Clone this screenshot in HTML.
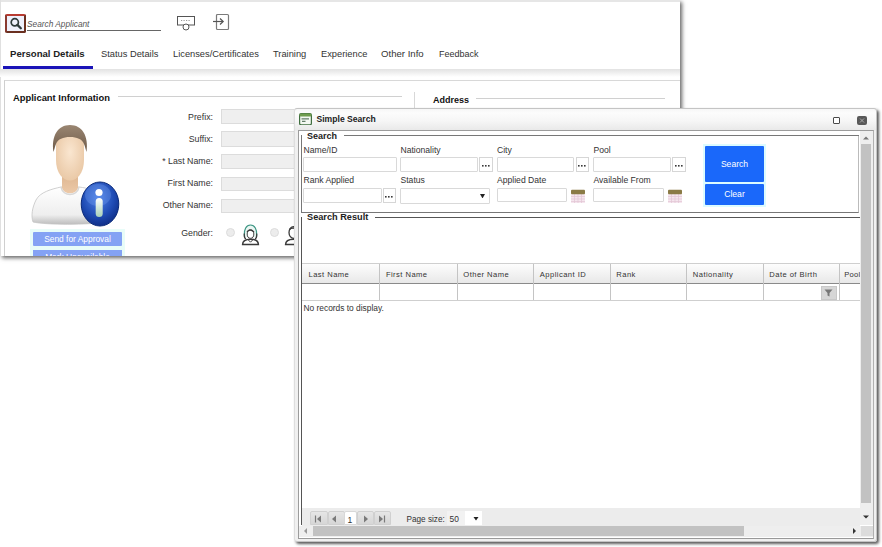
<!DOCTYPE html>
<html><head><meta charset="utf-8">
<style>
*{margin:0;padding:0;box-sizing:border-box}
html,body{width:882px;height:547px;overflow:hidden;background:#fff;font-family:"Liberation Sans",sans-serif;color:#333}
.a{position:absolute}
.t{position:absolute;white-space:nowrap;line-height:1}
.inp{position:absolute;border:1px solid #d9d9d9;background:#fff;border-radius:1px}
.ginp{position:absolute;border:1px solid #dcdcdc;background:#efefef}
.dots{position:absolute;border:1px solid #d6d6d6;background:#fff;font-size:9px;font-weight:bold;text-align:center;line-height:14px;color:#222}
</style></head><body>
<!-- background window -->
<div class="a" id="bgwin" style="left:0;top:0;width:680px;height:256px;background:#fff;box-shadow:2px 2px 4px #666;overflow:hidden">
  <div class="a" style="left:0;top:0;width:681px;height:2px;background:#e6e6e6"></div>
  <div class="a" style="left:0;top:0;width:1px;height:256px;background:#e0e0e0"></div>
  <!-- search box -->
  <div class="a" style="left:5px;top:14px;width:21px;height:19px;border:2px solid #6a3020;border-top-color:#b83a30;border-left-color:#8a3a30;border-radius:2px;background:#eef0fb"></div>
  <svg class="a" style="left:8px;top:16px" width="16" height="16" viewBox="0 0 16 16"><circle cx="6.8" cy="6.3" r="3.6" fill="none" stroke="#2e3a3a" stroke-width="1.7"/><line x1="9.4" y1="8.9" x2="12.8" y2="12.3" stroke="#2e3a3a" stroke-width="2.3" stroke-linecap="round"/></svg>
  <div class="t" style="left:27px;top:20px;font-size:8.3px;font-style:italic;color:#555">Search Applicant</div>
  <div class="a" style="left:27px;top:30px;width:134px;height:1px;background:#666"></div>
  <!-- icons -->
  <svg class="a" style="left:175px;top:14px" width="22" height="18" viewBox="0 0 22 18">
    <rect x="2.5" y="2.5" width="17" height="8.5" fill="#fff" stroke="#555" stroke-width="1"/>
    <line x1="6" y1="6.5" x2="16" y2="6.5" stroke="#999" stroke-width="1" stroke-dasharray="1.2 1.3"/>
    <circle cx="11" cy="13" r="3" fill="#fff" stroke="#555" stroke-width="1"/>
  </svg>
  <svg class="a" style="left:211px;top:12px" width="20" height="20" viewBox="0 0 20 20">
    <rect x="5.5" y="2.5" width="12" height="15" rx="1" fill="none" stroke="#7a7a7a" stroke-width="1.2"/>
    <line x1="2" y1="9.5" x2="12" y2="9.5" stroke="#555" stroke-width="1.2"/>
    <polyline points="9,6.5 12.2,9.5 9,12.5" fill="none" stroke="#555" stroke-width="1.2"/>
  </svg>
  <!-- tabs -->
  <div class="t" style="left:10px;top:49px;font-size:9.6px;font-weight:bold;color:#222">Personal Details</div>
  <div class="t" style="left:101px;top:49.5px;font-size:9.3px;color:#333">Status Details</div>
  <div class="t" style="left:173px;top:49.5px;font-size:9.3px;color:#333">Licenses/Certificates</div>
  <div class="t" style="left:273px;top:49.5px;font-size:9.3px;color:#333">Training</div>
  <div class="t" style="left:321px;top:49.5px;font-size:9.3px;color:#333">Experience</div>
  <div class="t" style="left:381px;top:49.2px;font-size:9.6px;color:#333">Other Info</div>
  <div class="t" style="left:439px;top:49.5px;font-size:9px;color:#333">Feedback</div>
  <div class="a" style="left:3px;top:66px;width:90px;height:3px;background:#1a14b8"></div>
  <div class="a" style="left:0;top:69px;width:681px;height:8px;background:linear-gradient(#e2e2e2,#fff)"></div>
  <!-- content frame -->
  <div class="a" style="left:4px;top:80px;width:677px;height:176px;border-left:1px solid #cfcfcf;border-top:1px solid #d8d8d8"></div>
  <div class="t" style="left:13px;top:93px;font-size:9.4px;font-weight:bold;color:#111">Applicant Information</div>
  <div class="a" style="left:118px;top:96px;width:284px;height:1px;background:#d0d0d0"></div>
  <div class="a" style="left:414px;top:92px;width:1px;height:17px;background:#d8d8d8"></div>
  <div class="t" style="left:433px;top:95.5px;font-size:9px;font-weight:bold;color:#111">Address</div>
  <div class="a" style="left:476px;top:98px;width:189px;height:1px;background:#d0d0d0"></div>
  <!-- labels -->
  <div class="t" style="left:100px;top:112.5px;width:113px;text-align:right;font-size:8.8px;color:#333">Prefix:</div>
  <div class="t" style="left:100px;top:134.5px;width:113px;text-align:right;font-size:8.8px;color:#333">Suffix:</div>
  <div class="t" style="left:100px;top:156.5px;width:113px;text-align:right;font-size:8.8px;color:#333">* Last Name:</div>
  <div class="t" style="left:100px;top:178.5px;width:113px;text-align:right;font-size:8.8px;color:#333">First Name:</div>
  <div class="t" style="left:100px;top:200.5px;width:113px;text-align:right;font-size:8.8px;color:#333">Other Name:</div>
  <div class="t" style="left:100px;top:229px;width:113px;text-align:right;font-size:8.8px;color:#333">Gender:</div>
  <div class="ginp" style="left:221px;top:109px;width:80px;height:15px"></div>
  <div class="ginp" style="left:221px;top:131px;width:80px;height:16px"></div>
  <div class="ginp" style="left:221px;top:154px;width:80px;height:15px"></div>
  <div class="ginp" style="left:221px;top:176.5px;width:80px;height:14.5px"></div>
  <div class="ginp" style="left:221px;top:198.5px;width:80px;height:14.5px"></div>
  <div class="a" style="left:226px;top:227.5px;width:9px;height:9px;border-radius:50%;background:#ececec;border:1px solid #dcdcdc"></div>
  <div class="a" style="left:269.5px;top:227.5px;width:9px;height:9px;border-radius:50%;background:#ececec;border:1px solid #dcdcdc"></div>
  <svg class="a" style="left:241px;top:224px" width="19" height="22" viewBox="0 0 19 22">
    <path d="M3.6 13C2.6 5 5.5 1 9.5 1S16.4 5 15.4 13" fill="#eaf7f3" stroke="#3e9684" stroke-width="1.2"/>
    <path d="M3.3 9.5C3 12.5 3.8 14.5 5 15M15.7 9.5C16 12.5 15.2 14.5 14 15" fill="none" stroke="#3a3a3a" stroke-width="1.2"/>
    <ellipse cx="9.5" cy="10" rx="3.3" ry="4.3" fill="#fff" stroke="#444" stroke-width="1"/>
    <path d="M6 8C7.5 5.5 10.5 5.5 13 8" stroke="#3a3a3a" fill="none" stroke-width="1.3"/>
    <path d="M1.6 20.6C1.6 17.2 4.5 15.3 9.5 15.3S17.4 17.2 17.4 20.6Z" fill="#fff" stroke="#3a3a3a" stroke-width="1.5"/>
    <path d="M7 15.6L9.5 18.2L12 15.6" stroke="#3a3a3a" fill="none" stroke-width="1"/>
  </svg>
  <svg class="a" style="left:284px;top:224px" width="12" height="22" viewBox="0 0 12 22">
    <ellipse cx="9.5" cy="8.5" rx="4.5" ry="5.8" fill="#fff" stroke="#3a3a3a" stroke-width="1.3"/>
    <path d="M5.5 5.5C7 3.5 11 3.5 13 5.5" stroke="#3a3a3a" fill="none" stroke-width="1.3"/>
    <path d="M1.6 20.6C1.6 17.2 4.5 15.3 9.5 15.3S17.4 17.2 17.4 20.6Z" fill="#fff" stroke="#3a3a3a" stroke-width="1.5"/>
  </svg>
  <!-- avatar -->
  <svg class="a" style="left:28px;top:118px" width="96" height="114" viewBox="0 0 96 114">
    <defs>
      <linearGradient id="hair" x1="0" y1="0" x2="0" y2="1"><stop offset="0" stop-color="#9a8672"/><stop offset="1" stop-color="#6e5a48"/></linearGradient>
      <radialGradient id="skin" cx="0.5" cy="0.45" r="0.6"><stop offset="0" stop-color="#fae6d0"/><stop offset="1" stop-color="#e9c7a4"/></radialGradient>
      <linearGradient id="shirt" x1="0" y1="0" x2="0" y2="1"><stop offset="0" stop-color="#ffffff"/><stop offset="0.75" stop-color="#eeeeee"/><stop offset="1" stop-color="#bdbdbd"/></linearGradient>
      <linearGradient id="neck" x1="0" y1="0" x2="0" y2="1"><stop offset="0" stop-color="#d9b08a"/><stop offset="1" stop-color="#ecc9a8"/></linearGradient>
      <radialGradient id="info" cx="0.45" cy="0.35" r="0.7"><stop offset="0" stop-color="#4f82e6"/><stop offset="0.6" stop-color="#1f4bb4"/><stop offset="1" stop-color="#0c2a80"/></radialGradient>
      <linearGradient id="istem" x1="0" y1="0" x2="0" y2="1"><stop offset="0" stop-color="#ffffff"/><stop offset="1" stop-color="#a8d0b8"/></linearGradient>
    </defs>
    <path d="M33 69C24 71 12 74 8 82C4 90 3 98 5 104C18 107 60 107 78 104L80 80C70 73 60 70 51 69Z" fill="url(#shirt)" stroke="#c4c4c4" stroke-width="0.8"/>
    <path d="M34 50L34 70C36 77 48 77 50 70L50 50Z" fill="url(#neck)"/>
    <path d="M33 69C35 79 49 79 51 69" fill="none" stroke="#d8d8d8" stroke-width="1.5"/>
    <path d="M28 28C28 14 34 11 42 11S56 14 56 28L56 42C56 55 49 62.5 42 62.5S28 55 28 42Z" fill="url(#skin)"/>
    <path d="M25.5 34C23 18 30 7 42 7S61 18 58.5 34C57.5 31 57 28 56 26C54 21 49 19 42 19S30 21 28 26C27 28 26.5 31 25.5 34Z" fill="url(#hair)"/>
    <ellipse cx="72" cy="86" rx="18.8" ry="22" fill="url(#info)" stroke="#0a2a7a" stroke-width="1"/>
    <ellipse cx="70" cy="77" rx="13" ry="11" fill="#7aa4f4" opacity="0.3"/>
    <circle cx="71" cy="74.5" r="3.6" fill="#fff"/>
    <rect x="67.7" y="80" width="7" height="19" rx="3.5" fill="url(#istem)"/>
  </svg>
  <div class="a" style="left:30px;top:229px;width:95px;height:28px;background:#e8fcf8"></div>
  <div class="a" style="left:33px;top:232px;width:89px;height:14px;background:#84a2f4;border-radius:1px"></div>
  <div class="t" style="left:33px;top:235px;width:89px;text-align:center;font-size:8.4px;color:#fff">Send for Approval</div>
  <div class="a" style="left:33px;top:250px;width:89px;height:8px;background:#84a2f4"></div>
  <div class="t" style="left:33px;top:253px;width:89px;text-align:center;font-size:8.4px;color:#fff">Mark Unavailable</div>
</div>
<!-- dialog -->
<div class="a" id="dlg" style="left:294px;top:108px;width:583px;height:434px;background:linear-gradient(#f6f6f6,#fcfcfc 4px,#f6f6f6 12px,#e9e9e9 21px,#f0f0f0 22px);border:1px solid #c4c4c4;border-left-color:#dedede;border-radius:3px;box-shadow:2px 2px 3px #5a5a5a"></div>
<!-- title -->
<svg class="a" style="left:299px;top:112.5px" width="13" height="12.5" viewBox="0 0 13 12.5">
  <rect x="0.6" y="0.6" width="11.8" height="11.3" rx="1.6" fill="#f4f8f2" stroke="#3f6e3f" stroke-width="1.2"/>
  <rect x="0.6" y="0.6" width="11.8" height="2.8" rx="1.2" fill="#6f9c4e"/>
  <line x1="2.5" y1="5.9" x2="10" y2="5.9" stroke="#3f5e46" stroke-width="1"/>
  <line x1="3" y1="8.3" x2="6.5" y2="8.3" stroke="#3f5e46" stroke-width="1"/>
</svg>
<div class="t" style="left:316.5px;top:114.8px;font-size:8.6px;font-weight:bold;color:#222">Simple Search</div>
<div class="a" style="left:832.5px;top:117px;width:7.5px;height:7px;border:1.6px solid #4a4a4a;border-radius:1px;background:#fff"></div>
<div class="a" style="left:857px;top:116px;width:10px;height:9px;background:#595959;border-radius:2px"></div>
<svg class="a" style="left:857px;top:116px" width="10" height="9" viewBox="0 0 10 9"><path d="M3 2.5L7 6.5M7 2.5L3 6.5" stroke="#aaa" stroke-width="1"/></svg>
<!-- content -->
<div class="a" style="left:298px;top:129.5px;width:576px;height:409px;background:#fff;border:1.5px solid #9c9c9c;border-right:1px solid #b0b0b0;border-bottom:1.5px solid #999"></div>
<!-- search fieldset -->
<div class="a" style="left:301px;top:135px;width:558px;height:78px;border:1px solid #777;border-top:none;border-right-color:#bbb"></div>
<div class="a" style="left:344px;top:135px;width:515px;height:1px;background:#777"></div>
<div class="t" style="left:307px;top:131.5px;font-size:9px;font-weight:bold;color:#222">Search</div>
<div class="t" style="left:303.5px;top:145.5px;font-size:8.6px;color:#333">Name/ID</div>
<div class="t" style="left:400.5px;top:145.5px;font-size:8.6px;color:#333">Nationality</div>
<div class="t" style="left:497px;top:145.5px;font-size:8.6px;color:#333">City</div>
<div class="t" style="left:593.5px;top:145.5px;font-size:8.6px;color:#333">Pool</div>
<div class="t" style="left:303.5px;top:176px;font-size:8.6px;color:#333">Rank Applied</div>
<div class="t" style="left:400.5px;top:176px;font-size:8.6px;color:#333">Status</div>
<div class="t" style="left:497px;top:176px;font-size:8.6px;color:#333">Applied Date</div>
<div class="t" style="left:593.5px;top:176px;font-size:8.6px;color:#333">Available From</div>
<div class="inp" style="left:303px;top:157px;width:94px;height:15px"></div>
<div class="inp" style="left:400px;top:157px;width:78px;height:15px"></div>
<div class="dots" style="left:479px;top:157px;width:14px;height:15px"><svg width="8" height="2" style="position:absolute;left:50%;margin-left:-4px;bottom:4px" viewBox="0 0 8 2"><rect x="0" y="0" width="1.6" height="1.6" fill="#3a3a3a"/><rect x="3" y="0" width="1.6" height="1.6" fill="#3a3a3a"/><rect x="6" y="0" width="1.6" height="1.6" fill="#3a3a3a"/></svg></div>
<div class="inp" style="left:497px;top:157px;width:77px;height:15px"></div>
<div class="dots" style="left:575.5px;top:157px;width:13px;height:15px"><svg width="8" height="2" style="position:absolute;left:50%;margin-left:-4px;bottom:4px" viewBox="0 0 8 2"><rect x="0" y="0" width="1.6" height="1.6" fill="#3a3a3a"/><rect x="3" y="0" width="1.6" height="1.6" fill="#3a3a3a"/><rect x="6" y="0" width="1.6" height="1.6" fill="#3a3a3a"/></svg></div>
<div class="inp" style="left:593px;top:157px;width:78px;height:15px"></div>
<div class="dots" style="left:672px;top:157px;width:14px;height:15px"><svg width="8" height="2" style="position:absolute;left:50%;margin-left:-4px;bottom:4px" viewBox="0 0 8 2"><rect x="0" y="0" width="1.6" height="1.6" fill="#3a3a3a"/><rect x="3" y="0" width="1.6" height="1.6" fill="#3a3a3a"/><rect x="6" y="0" width="1.6" height="1.6" fill="#3a3a3a"/></svg></div>
<div class="inp" style="left:303px;top:188px;width:78.5px;height:15px"></div>
<div class="dots" style="left:382.5px;top:188px;width:13.5px;height:15px"><svg width="8" height="2" style="position:absolute;left:50%;margin-left:-4px;bottom:4px" viewBox="0 0 8 2"><rect x="0" y="0" width="1.6" height="1.6" fill="#3a3a3a"/><rect x="3" y="0" width="1.6" height="1.6" fill="#3a3a3a"/><rect x="6" y="0" width="1.6" height="1.6" fill="#3a3a3a"/></svg></div>
<div class="inp" style="left:400px;top:188px;width:90px;height:15.5px"></div>
<svg class="a" style="left:480px;top:193.5px" width="5" height="4.5" viewBox="0 0 5 4.5"><path d="M0 0H5L2.5 4.5Z" fill="#222"/></svg>
<div class="inp" style="left:497px;top:188px;width:70px;height:14px"></div>
<div class="inp" style="left:593px;top:188px;width:71px;height:14px"></div>
<svg class="a" style="left:571px;top:189px" width="14" height="14" viewBox="0 0 14 14">
  <rect x="0" y="5" width="14" height="9" fill="#f5e6ee"/>
  <path d="M0 7.5H14M0 10H14M0 12.5H14M3.5 5V14M7 5V14M10.5 5V14" stroke="#e2c4d4" stroke-width="0.7"/>
  <rect x="0" y="0.8" width="14" height="4.5" rx="1" fill="#8a7a45"/>
</svg>
<svg class="a" style="left:668px;top:189px" width="14" height="14" viewBox="0 0 14 14">
  <rect x="0" y="5" width="14" height="9" fill="#f5e6ee"/>
  <path d="M0 7.5H14M0 10H14M0 12.5H14M3.5 5V14M7 5V14M10.5 5V14" stroke="#e2c4d4" stroke-width="0.7"/>
  <rect x="0" y="0.8" width="14" height="4.5" rx="1" fill="#8a7a45"/>
</svg>
<div class="a" style="left:703px;top:144px;width:63px;height:63px;background:#dcfbff"></div>
<div class="a" style="left:705px;top:146px;width:59px;height:36px;background:#1a68fa;border-radius:1px"></div>
<div class="t" style="left:705px;top:160px;width:59px;text-align:center;font-size:8.6px;color:#fff">Search</div>
<div class="a" style="left:705px;top:184px;width:59px;height:20.5px;background:#1a68fa;border-radius:1px"></div>
<div class="t" style="left:705px;top:190px;width:59px;text-align:center;font-size:8.6px;color:#fff">Clear</div>
<!-- search result fieldset -->
<div class="a" style="left:301px;top:217px;width:1px;height:308px;background:#555"></div>
<div class="a" style="left:375px;top:217px;width:486px;height:1px;background:#555"></div>
<div class="t" style="left:307px;top:212.5px;font-size:9.2px;font-weight:bold;color:#222">Search Result</div>
<!-- grid -->
<div class="a" style="left:302px;top:263px;width:559px;height:21px;background:linear-gradient(#fdfdfd,#e8e8e8);border-top:1px solid #cfcfcf;border-bottom:1px solid #8a8a8a"></div>
<div class="a" style="left:302px;top:299.5px;width:559px;height:1px;background:#cfcfcf"></div>
<div class="a" style="left:379.4px;top:264px;width:1px;height:36px;background:#c4c4c4"></div>
<div class="a" style="left:456.8px;top:264px;width:1px;height:36px;background:#c4c4c4"></div>
<div class="a" style="left:533.3px;top:264px;width:1px;height:36px;background:#c4c4c4"></div>
<div class="a" style="left:609.8px;top:264px;width:1px;height:36px;background:#c4c4c4"></div>
<div class="a" style="left:686.3px;top:264px;width:1px;height:36px;background:#c4c4c4"></div>
<div class="a" style="left:762.8px;top:264px;width:1px;height:36px;background:#c4c4c4"></div>
<div class="a" style="left:839.3px;top:264px;width:1px;height:36px;background:#c4c4c4"></div>
<div class="t" style="left:308.5px;top:270.5px;font-size:7.6px;letter-spacing:0.45px;color:#333">Last Name</div>
<div class="t" style="left:385.9px;top:270.5px;font-size:7.6px;letter-spacing:0.45px;color:#333">First Name</div>
<div class="t" style="left:463.3px;top:270.5px;font-size:7.6px;letter-spacing:0.45px;color:#333">Other Name</div>
<div class="t" style="left:539.8px;top:270.5px;font-size:7.6px;letter-spacing:0.45px;color:#333">Applicant ID</div>
<div class="t" style="left:616.3px;top:270.5px;font-size:7.6px;letter-spacing:0.45px;color:#333">Rank</div>
<div class="t" style="left:692.8px;top:270.5px;font-size:7.6px;letter-spacing:0.45px;color:#333">Nationality</div>
<div class="t" style="left:769.3px;top:270.5px;font-size:7.6px;letter-spacing:0.45px;color:#333">Date of Birth</div>
<div class="t" style="left:844.3px;top:270.5px;font-size:7.6px;letter-spacing:0.2px;color:#333">Pool</div>

<div class="a" style="left:820.5px;top:286px;width:16px;height:14px;background:#d6d6d6;border:1px solid #c8c8c8"></div>
<svg class="a" style="left:824px;top:289px" width="9" height="8" viewBox="0 0 9 8"><path d="M0.5 0.5H8.5L5.5 4V7.5L3.5 6.5V4Z" fill="#777"/></svg>
<div class="t" style="left:303.5px;top:303.5px;font-size:8.4px;color:#333">No records to display.</div>
<!-- pager -->
<div class="a" style="left:302px;top:507.5px;width:558px;height:18px;background:#ececec"></div>
<div class="a" style="left:310px;top:510.5px;width:17.5px;height:14.5px;border-radius:2px 2px 0 0;background:linear-gradient(#e6e6e6,#d6d6d6);border:1px solid #d0d0d0"></div>
<div class="a" style="left:327.5px;top:510.5px;width:17px;height:14.5px;border-radius:2px 2px 0 0;background:linear-gradient(#e6e6e6,#d6d6d6);border:1px solid #d0d0d0"></div>
<div class="a" style="left:344.2px;top:510.5px;width:12.5px;height:14.5px;border-radius:2px 2px 0 0;background:#fff;border:1px solid #d8d8d8"></div>
<div class="a" style="left:356.5px;top:510.5px;width:17px;height:14.5px;border-radius:2px 2px 0 0;background:linear-gradient(#e6e6e6,#d6d6d6);border:1px solid #d0d0d0"></div>
<div class="a" style="left:373.5px;top:510.5px;width:17px;height:14.5px;border-radius:2px 2px 0 0;background:linear-gradient(#e6e6e6,#d6d6d6);border:1px solid #d0d0d0"></div>
<svg class="a" style="left:310px;top:512px" width="81" height="14" viewBox="0 0 81 14">
  <path d="M5.5 3.5V10.5" stroke="#7a7a7a" stroke-width="1.2"/><path d="M11 3.5V10.5L7 7Z" fill="#7a7a7a"/>
  <path d="M26 3.5V10.5L22 7Z" fill="#7a7a7a"/>
  <path d="M54 3.5V10.5L58 7Z" fill="#7a7a7a"/>
  <path d="M69 3.5V10.5L73 7Z" fill="#7a7a7a"/><path d="M74.5 3.5V10.5" stroke="#7a7a7a" stroke-width="1.2"/>
</svg>
<div class="t" style="left:347.5px;top:515.5px;font-size:8.6px;color:#333">1</div>
<div class="t" style="left:406.5px;top:515.5px;font-size:8.2px;letter-spacing:0;color:#333">Page size:</div>
<div class="a" style="left:447px;top:511px;width:35px;height:14px;background:#fff"></div>
<div class="a" style="left:447px;top:511px;width:18px;height:14px;background:#f2f2f2"></div>
<div class="t" style="left:449.5px;top:514.8px;font-size:8.4px;color:#333">50</div>
<svg class="a" style="left:473px;top:516.5px" width="6" height="4" viewBox="0 0 6 4"><path d="M0.5 0H5.5L3 3.5Z" fill="#222"/></svg>
<!-- scrollbars -->
<div class="a" style="left:860px;top:131px;width:13px;height:394px;background:#eeeeee"></div>
<div class="a" style="left:860.5px;top:143.5px;width:10.5px;height:359px;background:#c2c2c2"></div>
<svg class="a" style="left:862px;top:135px" width="8" height="5" viewBox="0 0 8 5"><path d="M1 4.5H7L4 1.5Z" fill="#777"/></svg>
<svg class="a" style="left:862px;top:515px" width="8" height="5" viewBox="0 0 8 5"><path d="M1 0.5H7L4 3.5Z" fill="#333"/></svg>
<div class="a" style="left:299px;top:525.5px;width:574px;height:11px;background:#eeeeee"></div>
<div class="a" style="left:312.5px;top:526px;width:431px;height:10px;background:#c2c2c2"></div>
<div class="a" style="left:860.5px;top:526px;width:12px;height:10px;background:#dcdcdc"></div>
<svg class="a" style="left:303px;top:527px" width="5" height="8" viewBox="0 0 5 8"><path d="M4 1V7L1 4Z" fill="#999"/></svg>
<svg class="a" style="left:852px;top:527px" width="5" height="8" viewBox="0 0 5 8"><path d="M1 1V7L4 4Z" fill="#333"/></svg>
</body></html>
